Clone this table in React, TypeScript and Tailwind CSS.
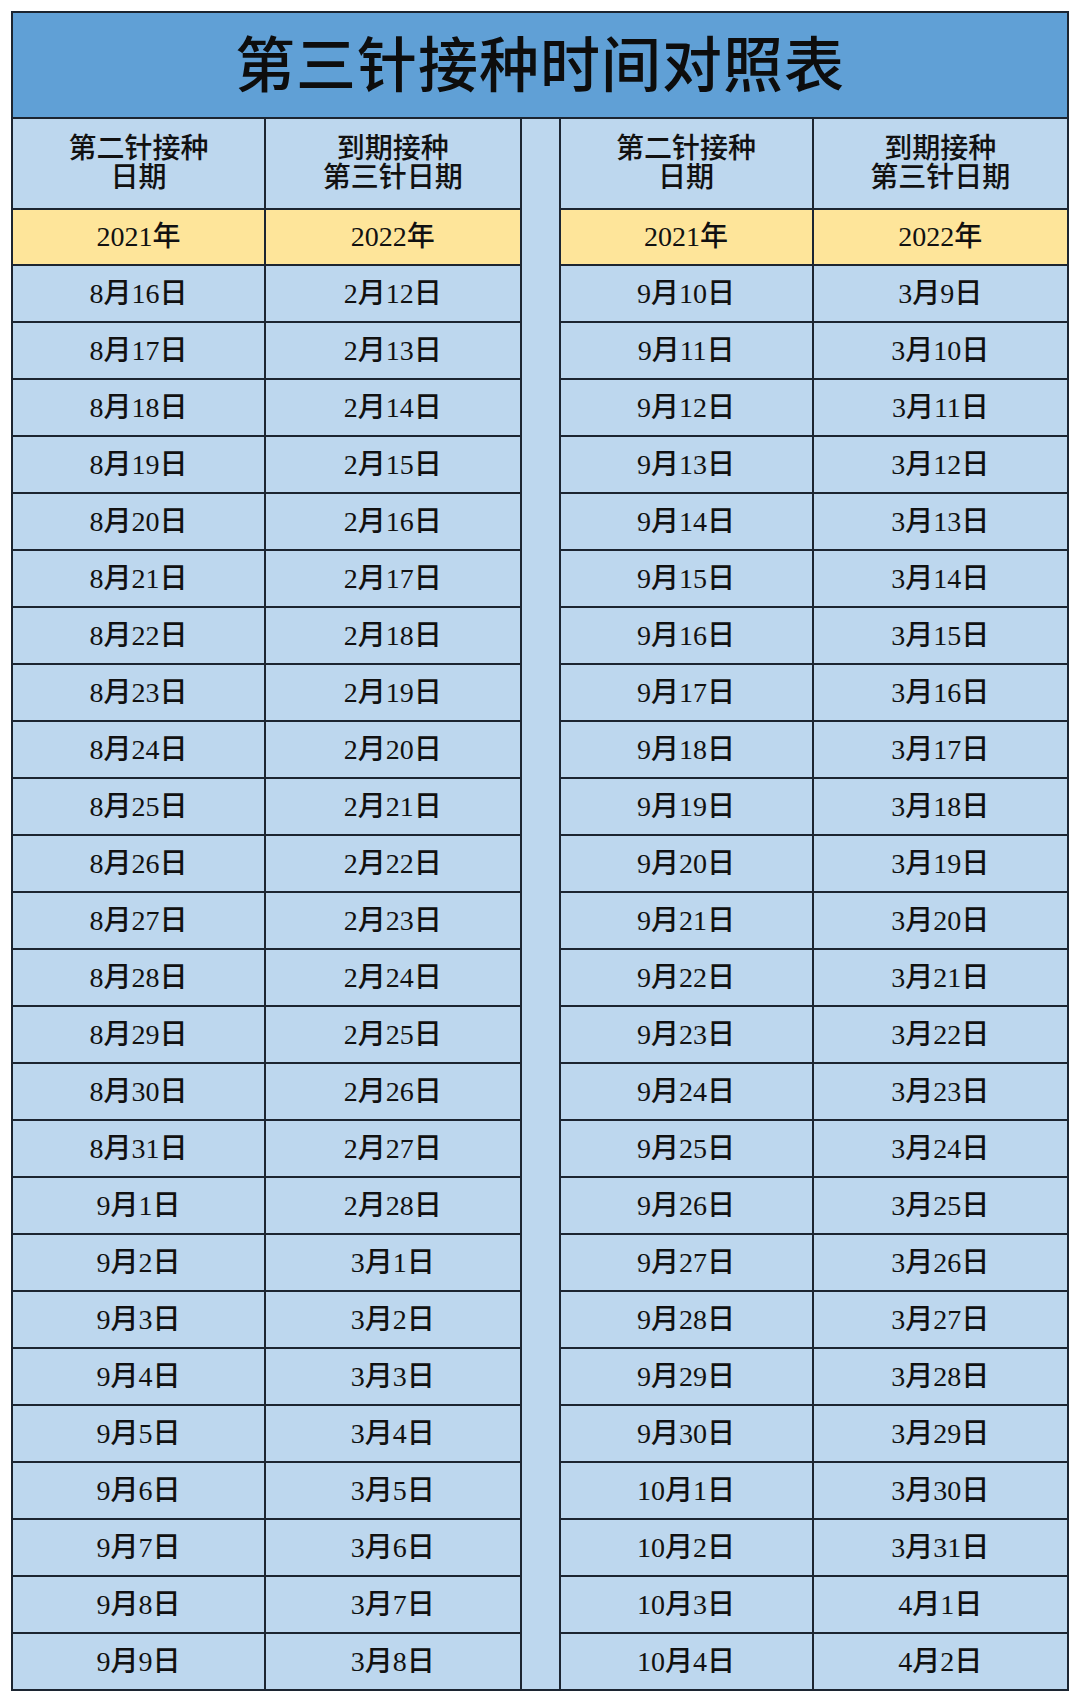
import React from "react";

const left: [string, string][] = [];
for (let d = 16; d <= 31; d++) left.push([`8月${d}日`, `2月${d - 4}日`]);
left.push(["9月1日", "2月28日"]);
for (let d = 2; d <= 9; d++) left.push([`9月${d}日`, `3月${d - 1}日`]);

const right: [string, string][] = [];
for (let d = 10; d <= 30; d++) right.push([`9月${d}日`, `3月${d - 1}日`]);
right.push(["10月1日", "3月30日"]);
right.push(["10月2日", "3月31日"]);
right.push(["10月3日", "4月1日"]);
right.push(["10月4日", "4月2日"]);

const cellFont = { fontFamily: '"Liberation Serif", "Noto Sans CJK SC", serif' };

function Block({ rows }: { rows: [string, string][] }) {
  return (
    <div className="flex-1 flex flex-col font-medium text-[#111111]" style={cellFont}>
      <div className="flex h-[91px] border-b-2 border-[#1c2531] bg-[#bdd7ee]">
        <div className="w-1/2 border-r-2 border-[#1c2531] flex flex-col items-center justify-center text-[28px] leading-[29px] pb-[2px]">
          <span>第二针接种</span>
          <span>日期</span>
        </div>
        <div className="w-1/2 flex flex-col items-center justify-center text-[28px] leading-[29px] pb-[2px]">
          <span>到期接种</span>
          <span>第三针日期</span>
        </div>
      </div>
      <div className="flex h-[56px] border-b-2 border-[#1c2531] bg-[#fee59a]">
        <div className="w-1/2 border-r-2 border-[#1c2531] flex items-center justify-center text-[28px]">2021年</div>
        <div className="w-1/2 flex items-center justify-center text-[28px]">2022年</div>
      </div>
      {rows.map((r, i) => (
        <div
          key={i}
          className={
            i === rows.length - 1
              ? "flex h-[55px] bg-[#bdd7ee]"
              : "flex h-[57px] border-b-2 border-[#1c2531] bg-[#bdd7ee]"
          }
        >
          <div className="w-1/2 border-r-2 border-[#1c2531] flex items-center justify-center text-[28px]">
            {r[0]}
          </div>
          <div className="w-1/2 flex items-center justify-center text-[28px]">{r[1]}</div>
        </div>
      ))}
    </div>
  );
}

export default function App() {
  return (
    <div className="w-[1080px] h-[1701px] bg-white pt-[11px] pl-[11px]">
      <div className="w-[1058px] border-2 border-[#1c2531] flex flex-col">
        <div
          className="h-[106px] bg-[#60a0d6] border-b-2 border-[#1c2531] flex items-center justify-center pb-[8px] text-[60px] font-medium text-[#0d0d0d] tracking-[1px]"
          style={{ fontFamily: '"Noto Sans CJK SC", sans-serif' }}
        >
          第三针接种时间对照表
        </div>
        <div className="flex">
          <Block rows={left} />
          <div className="w-[41px] bg-[#bdd7ee] border-x-2 border-[#1c2531]" />
          <Block rows={right} />
        </div>
      </div>
    </div>
  );
}
